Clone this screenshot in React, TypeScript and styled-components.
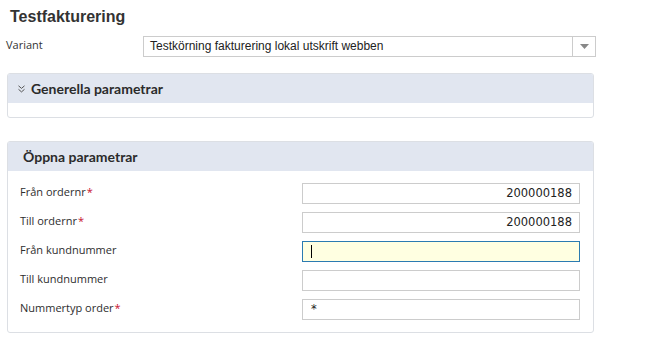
import { FC } from 'react';

import styled, { createGlobalStyle } from 'styled-components';

const GlobalStyle = createGlobalStyle`
  body {
    margin: 0;
    background: #fff;
    font-family: 'Liberation Sans', Arial, sans-serif;
    color: #333;
  }
`;

type Param = {
  label: string;
  required?: boolean;
  value?: string;
  align?: 'left' | 'right';
  focused?: boolean;
};

const params: Param[] = [
  { label: 'Från ordernr', required: true, value: '200000188', align: 'right' },
  { label: 'Till ordernr', required: true, value: '200000188', align: 'right' },
  { label: 'Från kundnummer', focused: true },
  { label: 'Till kundnummer' },
  { label: 'Nummertyp order', required: true, value: '*' },
];

const App: FC = () => {
  return (
    <Page>
      <GlobalStyle />
      <Title>Testfakturering</Title>
      <VariantRow>
        <VariantLabel>Variant</VariantLabel>
        <Select>
          <SelectText>Testkörning fakturering lokal utskrift webben</SelectText>
          <SelectArrow>
            <svg width='9' height='5' viewBox='0 0 9 5'>
              <path d='M0 0h9L4.5 5z' fill='#888' />
            </svg>
          </SelectArrow>
        </Select>
      </VariantRow>

      <Panel $gap={23}>
        <PanelHeader $indent={10}>
          <Chevron>
            <svg width='7' height='8' viewBox='0 0 7 8'>
              <path d='M0.5 0.8l3 2.6 3-2.6M0.5 4.3l3 2.6 3-2.6' fill='none' stroke='#555' strokeWidth='1' />
            </svg>
          </Chevron>
          Generella parametrar
        </PanelHeader>
        <EmptyBody />
      </Panel>

      <Panel $gap={0}>
        <PanelHeader $indent={15}>Öppna parametrar</PanelHeader>
        <PanelBody>
          {params.map((p) => (
            <Row key={p.label}>
              <Label>
                {p.label}
                {p.required && <Star>*</Star>}
              </Label>
              <Input $align={p.align} $focused={p.focused}>
                {p.focused ? <Caret /> : p.value}
              </Input>
            </Row>
          ))}
        </PanelBody>
      </Panel>
    </Page>
  );
};

const Page = styled.div`
  width: 648px;
  height: 363px;
  padding: 7px 0 0 0;
  box-sizing: border-box;
`;

const Title = styled.h1`
  margin: 0 0 0 10px;
  font-size: 16px;
  line-height: 19px;
  font-weight: bold;
  color: #333;
`;

const VariantRow = styled.div`
  display: flex;
  align-items: center;
  margin-top: 10px;
  padding-left: 6px;
`;

const VariantLabel = styled.div`
  width: 137px;
  font-family: 'Open Sans', sans-serif;
  font-size: 11px;
  color: #333;
  margin-top: -4px;
`;

const Select = styled.div`
  display: flex;
  width: 453px;
  height: 21px;
  border: 1px solid #ccc;
  box-sizing: border-box;
  background: #fff;
`;

const SelectText = styled.div`
  flex: 1;
  padding-left: 6px;
  font-family: 'Liberation Sans', Arial, sans-serif;
  font-size: 12px;
  line-height: 19px;
  color: #222;
`;

const SelectArrow = styled.div`
  width: 22px;
  border-left: 1px solid #ccc;
  display: flex;
  align-items: center;
  justify-content: center;
`;

const Panel = styled.section<{ $gap: number }>`
  width: 587px;
  margin: 16px 0 0 7px;
  margin-bottom: ${(p) => p.$gap}px;
  border: 1px solid #dcdfe4;
  border-radius: 3px;
  box-sizing: border-box;
  overflow: hidden;
`;

const PanelHeader = styled.div<{ $indent: number }>`
  display: flex;
  align-items: center;
  height: 29px;
  padding-left: ${(p) => p.$indent}px;
  background: #e1e6f0;
  font-family: Lato, sans-serif;
  font-weight: bold;
  font-size: 14px;
  color: #2b2b2b;
`;

const Chevron = styled.span`
  display: inline-flex;
  margin-right: 6px;
  margin-top: 1px;
`;

const EmptyBody = styled.div`
  height: 14px;
`;

const PanelBody = styled.div`
  display: flex;
  flex-direction: column;
  gap: 8px;
  padding: 12px 13px 12px 12px;
`;

const Row = styled.div`
  display: flex;
  align-items: center;
  justify-content: space-between;
`;

const Label = styled.div`
  font-family: 'Open Sans', sans-serif;
  font-size: 11px;
  color: #2e2e2e;
  margin-top: -5px;
`;

const Star = styled.span`
  color: #c8102e;
  margin-left: 1px;
  font-size: 11px;
`;

const Input = styled.div<{ $align?: 'left' | 'right'; $focused?: boolean }>`
  width: 278px;
  height: 21px;
  box-sizing: border-box;
  border: 1px solid ${(p) => (p.$focused ? '#2b7bb1' : '#ccc')};
  background: ${(p) => (p.$focused ? '#ffffe1' : '#fff')};
  padding: 0 7px 0 8px;
  font-family: 'DejaVu Sans', Verdana, sans-serif;
  font-size: 11.5px;
  line-height: 19px;
  color: #222;
  display: flex;
  align-items: center;
  justify-content: ${(p) => (p.$align === 'right' ? 'flex-end' : 'flex-start')};
`;

const Caret = styled.span`
  display: inline-block;
  width: 1px;
  height: 13px;
  background: #000;
`;

export default App;
